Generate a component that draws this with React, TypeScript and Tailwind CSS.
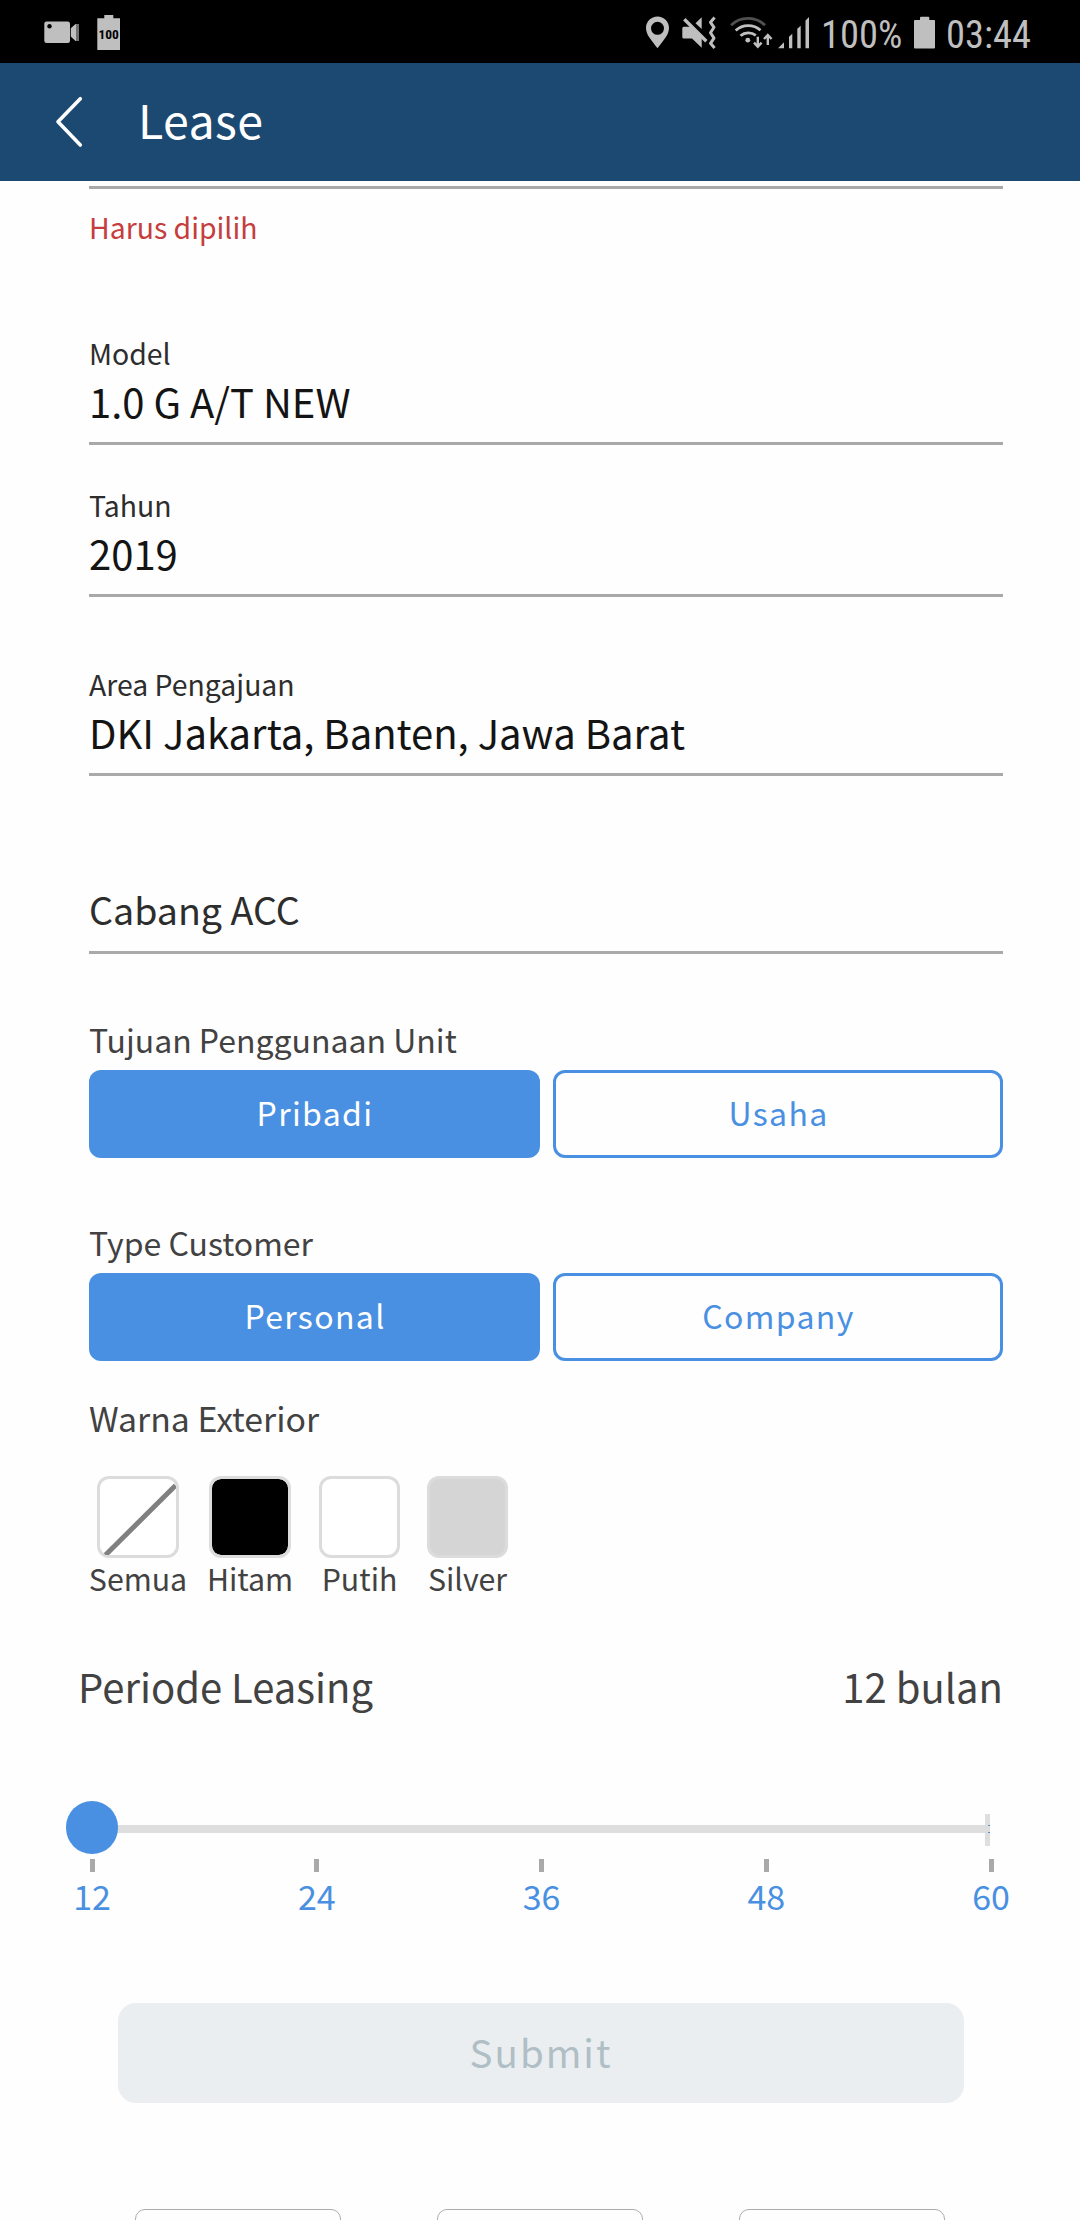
import type { ReactNode } from 'react';

const ICON = '#bfbfbf';

function StatusBar() {
  return (
    <div className="flex h-[63px] shrink-0 items-center bg-black pl-11">
      {/* Recording camera */}
      <svg width="36" height="63" viewBox="44 0 36 63" fill={ICON}>
        <rect x="44.3" y="21.5" width="25.7" height="21.5" rx="2.2" />
        <circle cx="49.5" cy="26.3" r="2.2" fill="#000" />
        <path d="M70.8 28.2 75.6 24h1v17h-1l-4.8-4.4z" />
        <path d="M76.6 24h2.4v17h-2.4z" fill="#707070" />
      </svg>
      {/* Battery with level */}
      <svg className="ml-[17px]" width="24" height="63" viewBox="97 0 24 63" fill={ICON}>
        <path d="M97.3 18.3h7V15h9v3.3h6.7V50H97.3z" />
        <text
          x="108.7"
          y="39.2"
          textAnchor="middle"
          className="font-['Roboto',sans-serif] text-[13.5px] font-bold [font-stretch:85%]"
          textLength="20.4"
          lengthAdjust="spacingAndGlyphs"
          fill="#000"
        >
          100
        </text>
      </svg>
      {/* Location pin */}
      <svg className="ml-[524px]" width="25" height="63" viewBox="645 0 25 63" fill={ICON}>
        <path
          fillRule="evenodd"
          d="M657.5 16.6c-6.4 0-11.5 5-11.5 11.4 0 7 6.3 13.2 11.5 20.3 5.2-7.1 11.5-13.3 11.5-20.3 0-6.4-5.1-11.4-11.5-11.4zm0 5.200a6.5 6.5 0 1 1 0 13 6.5 6.5 0 0 1 0-13z"
        />
      </svg>
      {/* Muted speaker with vibration */}
      <svg className="ml-[12px]" width="34" height="63" viewBox="682 0 34 63" fill={ICON}>
        <path d="M682.3 28.2q0-1.500 1.500-1.500h8l9.900 9.600v11.400l-9.700-9.200h-8.200q-1.500 0-1.500-1.500z" />
        <path d="M695.500 23.200 701.700 17.200v11.800z" />
        <path d="M684.300 19.300 706.300 41.200" stroke={ICON} strokeWidth="3.400" />
        <path
          d="m714.600 17.600-4.100 4.700 3.500 5-3.500 5.400 3.500 5.400-3.500 5.200 4.100 4.600"
          fill="none"
          stroke={ICON}
          strokeWidth="3"
          strokeLinejoin="round"
        />
      </svg>
      {/* Wi-Fi with transfer arrows */}
      <svg className="ml-[14px]" width="43" height="63" viewBox="730 0 43 63" fill="none" stroke={ICON} strokeWidth="2.800">
        <path d="M731 25.300a24.500 24.500 0 0 1 34 0" stroke="#505050" />
        <path d="M735.700 30.500a18.500 18.500 0 0 1 24.800-.300" />
        <path d="M740.500 35.700a12 12 0 0 1 15.300-.300" />
        <circle cx="747.800" cy="40.200" r="2.400" fill={ICON} stroke="none" />
        <path d="M757.800 36.700v10M754 42.700l3.800 4 3.800-4" strokeWidth="2.400" />
        <path d="M767.800 45v-10M764 39l3.800-4 3.800 4" strokeWidth="2.400" />
      </svg>
      {/* Signal bars */}
      <svg className="ml-[5px]" width="32" height="63" viewBox="778 0 32 63" fill={ICON}>
        <path d="M778 48.200l6-6v6zM789 48.200V36.700l3.300-3v14.500zM797.300 48.200V28.800l3.400-3v22.400zM805.500 48.200V20.500l3.500-3.500v31.200z" />
      </svg>
      <span className="ml-[11px] w-[83px] origin-left scale-x-[.975] pt-[6px] font-['Roboto',sans-serif] text-[39.5px] leading-none whitespace-nowrap text-[#bfbfbf] [font-stretch:75%]">
        100%
      </span>
      {/* Battery */}
      <svg className="ml-[9px]" width="23" height="63" viewBox="913 0 23 63" fill={ICON}>
        <path d="M915 20h5v-2.300q0-1 1-1h7.300q1 0 1 1V20h4.700q1 0 1 1v26.600q0 1-1 1h-19q-1 0-1-1V21q0-1 1-1z" />
      </svg>
      <span className="ml-[10px] origin-left scale-x-[.975] pt-[6px] font-['Roboto',sans-serif] text-[39.5px] leading-none whitespace-nowrap text-[#bfbfbf] [font-stretch:75%]">
        03:44
      </span>
    </div>
  );
}

function Header() {
  return (
    <header className="flex h-[118px] shrink-0 items-center bg-[#1c4971] pl-[54px]">
      <svg width="30" height="118" viewBox="54 63 30 118" fill="none">
        <path
          d="M80.300 98.700 58 121.800 80.300 145"
          stroke="#fff"
          strokeWidth="3.600"
          strokeLinecap="round"
          strokeLinejoin="round"
        />
      </svg>
      <h1 className="ml-[54px] pb-[6px] text-[46.5px] leading-[60px] tracking-[.4px] text-white">Lease</h1>
    </header>
  );
}

function Field({ label, value, className }: { label: string; value: string; className: string }) {
  return (
    <div className={`border-b-[3px] border-[#a9a9a9] pb-4 ${className}`}>
      <p className="text-[28.4px] leading-[40px] text-[#2d2d2d]">{label}</p>
      <p className="mt-[3px] text-[40px] leading-[50px] text-[#141414]">{value}</p>
    </div>
  );
}

function Toggle({ label, options, className }: { label: string; options: [string, string]; className: string }) {
  return (
    <div className={className}>
      <p className="text-[32px] leading-[40px] text-[#424242]">{label}</p>
      <div className="mt-[11px] flex h-[88px] gap-[13px] text-[32px] leading-[40px] tracking-[1.35px]">
        <button className="w-[451px] rounded-xl bg-[#4a90e2] pb-1 pl-px text-white">{options[0]}</button>
        <button className="w-[450px] rounded-xl border-[3px] border-[#4a90e2] pb-1 pl-px text-[#4a90e2]">{options[1]}</button>
      </div>
    </div>
  );
}

function Swatch({ label, box, item, children }: { label: string; box: string; item: string; children?: ReactNode }) {
  return (
    <div className={`flex flex-col items-center ${item}`}>
      <div className={`h-[82px] rounded-xl border-[3px] border-[#dcdcdc] ${box}`}>{children}</div>
      <p className="text-[30.3px] leading-[40px] whitespace-nowrap text-[#424242]">{label}</p>
    </div>
  );
}

function Slider() {
  return (
    <div className="mt-[90px]">
      <div className="relative mr-[90px] ml-[66px] flex h-[53px] items-center">
        <div className="mt-[3px] ml-[26px] h-2 w-[893px] bg-[#dedede]" />
        <div className="mt-[5px] flex h-8 w-[5px] flex-col items-end justify-center gap-[6px] bg-[#dedede]">
          <div className="-mt-[2px] h-px w-[2px] bg-[#4a90e2]" />
          <div className="h-px w-[2px] bg-[#4a90e2]" />
        </div>
        <div className="absolute top-0 left-0 h-[53px] w-[52px] rounded-full bg-[#4a90e2]" />
      </div>
      <div className="mt-[5px] flex justify-between pr-[65px] pl-[68px]">
        {[12, 24, 36, 48, 60].map((n) => (
          <div key={n} className="flex w-12 flex-col items-center">
            <div className="h-[13px] w-[5px] bg-[#a9a9a9] first:min-w-[5px]" />
            <p className="mt-1 text-[34px] leading-[40px] text-[#4a90e2]">{n}</p>
          </div>
        ))}
      </div>
    </div>
  );
}

export default function App() {
  return (
    <div className="flex h-[2220px] w-[1080px] flex-col overflow-hidden bg-white font-['Noto_Sans_CJK_SC',sans-serif]">
      <StatusBar />
      <Header />
      <main className="min-h-0 flex-1 overflow-hidden bg-[#fefefe]">
        <div className="pr-[77px] pl-[89px]">
          <div className="mt-[5px] h-[3px] bg-[#a9a9a9]" />
          <p className="mt-[18px] text-[28.4px] leading-[40px] text-[#c53d3d]">Harus dipilih</p>
          <Field label="Model" value="1.0 G A/T NEW" className="mt-[86px]" />
          <Field label="Tahun" value="2019" className="mt-10" />
          <Field label="Area Pengajuan" value="DKI Jakarta, Banten, Jawa Barat" className="mt-[67px]" />
          <p className="mt-[108px] border-b-[3px] border-[#a9a9a9] pb-[17px] text-[37.6px] leading-[50px] text-[#2d2d2d]">
            Cabang ACC
          </p>
          <Toggle label="Tujuan Penggunaan Unit" options={['Pribadi', 'Usaha']} className="mt-[65px]" />
          <Toggle label="Type Customer" options={['Personal', 'Company']} className="mt-16" />
          <p className="mt-[37px] text-[33.8px] leading-[40px] text-[#424242]">Warna Exterior</p>
          <div className="mt-[38px] flex">
            <Swatch label="Semua" item="w-[98px]" box="w-[82px] bg-white">
              <svg width="76" height="76" viewBox="0 0 76 76">
                <path d="M5.500 76 75.500 6.500" stroke="#808080" strokeWidth="5" />
              </svg>
            </Swatch>
            <Swatch label="Hitam" item="ml-[19px] w-[88px]" box="w-[82px] bg-black bg-clip-padding" />
            <Swatch label="Putih" item="ml-[22px] w-[87px]" box="w-[81px] bg-white" />
            <Swatch label="Silver" item="ml-[21px] w-[87px]" box="w-[81px] bg-[#d5d5d5]" />
          </div>
          <div className="mt-[63px] -ml-[11px] flex justify-between text-[40px] leading-[50px] text-[#424242]">
            <p>Periode Leasing</p>
            <p>12 bulan</p>
          </div>
        </div>
        <Slider />
        <button className="mt-[87px] ml-[118px] block h-[100px] w-[846px] rounded-[18px] bg-[#eaeef1] pb-1 text-[38.5px] leading-[50px] tracking-[2px] text-[#b0bec5]">
          Submit
        </button>
        <div className="mt-[106px] ml-[135px] flex gap-24">
          {[0, 1, 2].map((n) => (
            <div key={n} className="h-52 w-[206px] rounded-[10px] border-[1.5px] border-[#adadad]" />
          ))}
        </div>
      </main>
    </div>
  );
}
